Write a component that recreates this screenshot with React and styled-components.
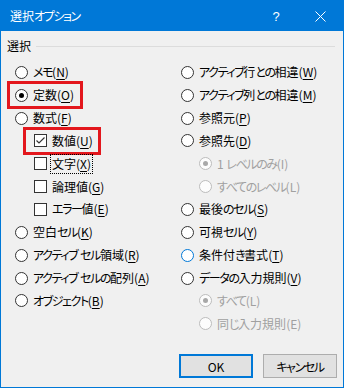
import React from "react";
import styled, { createGlobalStyle, css } from "styled-components";

const GlobalStyle = createGlobalStyle`
  html, body { margin: 0; padding: 0; background: #f0f0f0; }
  body {
    font-family: "Noto Sans CJK JP", "Noto Sans", sans-serif;
    font-size: 12px;
    font-feature-settings: "palt";
  }
`;

const Dialog = styled.div`
  width: 344px;
  height: 388px;
  box-sizing: border-box;
  border: 1px solid #0078d7;
  background: #f0f0f0;
  display: flex;
  flex-direction: column;
  color: #000;
`;

const TitleBar = styled.div`
  height: 30px;
  flex: none;
  background: #0078d7;
  color: #fff;
  display: flex;
  align-items: center;
  padding-left: 9px;
`;

const Title = styled.div`
  flex: 1;
  font-size: 12px;
  line-height: 16px;
`;

const TitleButton = styled.div`
  width: 46px;
  height: 30px;
  display: flex;
  align-items: center;
  justify-content: center;
  font-family: "Liberation Sans", sans-serif;
  font-size: 13px;
  padding-left: ${(p) => p.$shift || 0}px;
  box-sizing: border-box;
`;

const GroupHeader = styled.div`
  display: flex;
  align-items: center;
  gap: 5px;
  height: 16px;
  margin: 7px 8px 0 6px;
  line-height: 16px;
`;

const Rule = styled.div`
  flex: 1;
  height: 1px;
  background: #dcdcdc;
`;

const Columns = styled.div`
  display: grid;
  grid-template-columns: 166px 1fr;
  padding: 7px 0 0 14px;
`;

const Column = styled.div`
  display: grid;
  grid-auto-rows: 22.85px;
`;

const Row = styled.div`
  display: flex;
  align-items: center;
  padding-left: ${(p) => p.$indent || 0}px;
`;

const Item = styled.div`
  position: relative;
  display: flex;
  align-items: center;
  gap: 5px;
  line-height: 16px;
  color: ${(p) => (p.$disabled ? "#a0a0a0" : "#000")};
  ${(p) =>
    p.$mark &&
    css`
      &::after {
        content: "";
        position: absolute;
        top: -6px;
        bottom: -6px;
        left: ${p.$mark.left}px;
        right: ${p.$mark.right}px;
        border: 3px solid #e3171d;
      }
    `}
`;

const Radio = styled.span`
  width: 13px;
  height: 13px;
  box-sizing: border-box;
  border-radius: 50%;
  border: 1px solid ${(p) => (p.$disabled ? "#bcbcbc" : p.$hover ? "#0078d7" : "#333")};
  background: ${(p) => (p.$disabled ? "#fcfcfc" : "#fff")};
  display: flex;
  align-items: center;
  justify-content: center;
  flex: none;
  &::before {
    content: "";
    display: ${(p) => (p.$checked ? "block" : "none")};
    width: 5px;
    height: 5px;
    border-radius: 50%;
    background: ${(p) => (p.$disabled ? "#a8a8a8" : "#000")};
  }
`;

const Box = styled.span`
  width: 13px;
  height: 13px;
  box-sizing: border-box;
  border: 1px solid #333;
  background: #fff;
  flex: none;
  display: flex;
  align-items: center;
  justify-content: center;
`;

const Text = styled.span`
  white-space: pre;
  ${(p) =>
    p.$focus &&
    css`
      outline: 1px dotted #000;
      outline-offset: 1px;
    `}
`;

// Yu Gothic UI kana are narrower than Noto's, tighten kana runs
const Kana = styled.span`
  letter-spacing: -1.4px;
`;

const Key = styled.span`
  text-decoration: ${(p) => (p.$disabled ? "none" : "underline")};
  text-underline-offset: 2px;
`;

const Footer = styled.div`
  margin-top: auto;
  display: flex;
  justify-content: flex-end;
  gap: 10px;
  padding: 0 6px 9px 0;
`;

const Button = styled.button`
  width: 74px;
  height: 24px;
  box-sizing: border-box;
  background: #e1e1e1;
  border: ${(p) => (p.$primary ? "2px solid #0078d7" : "1px solid #adadad")};
  font-family: "Noto Sans CJK JP", "Noto Sans", sans-serif;
  font-feature-settings: "palt";
  font-size: 12px;
  color: #000;
  padding: 0;
`;

const left = [
  { type: "radio", label: "メモ", key: "N" },
  { type: "radio", label: "定数", key: "O", checked: true, mark: { left: -8, right: -9 } },
  { type: "radio", label: "数式", key: "F" },
  { type: "check", label: "数値", key: "U", checked: true, indent: 19, mark: { left: -11, right: -8 } },
  { type: "check", label: "文字", key: "X", indent: 19, focus: true },
  { type: "check", label: "論理値", key: "G", indent: 19 },
  { type: "check", label: "エラー値", key: "E", indent: 19 },
  { type: "radio", label: "空白セル", key: "K" },
  { type: "radio", label: "アクティブ セル領域", key: "R" },
  { type: "radio", label: "アクティブ セルの配列", key: "A" },
  { type: "radio", label: "オブジェクト", key: "B" },
];

const right = [
  { type: "radio", label: "アクティブ行との相違", key: "W" },
  { type: "radio", label: "アクティブ列との相違", key: "M" },
  { type: "radio", label: "参照元", key: "P" },
  { type: "radio", label: "参照先", key: "D" },
  { type: "radio", label: "1 レベルのみ", key: "I", indent: 18, disabled: true, checked: true },
  { type: "radio", label: "すべてのレベル", key: "L", indent: 18, disabled: true },
  { type: "radio", label: "最後のセル", key: "S" },
  { type: "radio", label: "可視セル", key: "Y" },
  { type: "radio", label: "条件付き書式", key: "T", hover: true },
  { type: "radio", label: "データの入力規則", key: "V" },
  { type: "radio", label: "すべて", key: "L", indent: 18, disabled: true, checked: true },
  { type: "radio", label: "同じ入力規則", key: "E", indent: 18, disabled: true },
];

function JpText({ children }) {
  return children
    .split(/([\u3040-\u30ff]+)/)
    .map((part, i) =>
      /[\u3040-\u30ff]/.test(part) ? <Kana key={i}>{part}</Kana> : part
    );
}

function CheckMark() {
  return (
    <svg width="11" height="11" viewBox="0 0 11 11">
      <polyline points="1.5,5.5 4,8 9.5,2.5" fill="none" stroke="#333" strokeWidth="1.2" />
    </svg>
  );
}

function Option({ opt }) {
  return (
    <Row $indent={opt.indent}>
      <Item $disabled={opt.disabled} $mark={opt.mark}>
        {opt.type === "radio" ? (
          <Radio $checked={opt.checked} $disabled={opt.disabled} $hover={opt.hover} />
        ) : (
          <Box>{opt.checked && <CheckMark />}</Box>
        )}
        <Text $focus={opt.focus}>
          <JpText>{opt.label}</JpText>(<Key $disabled={opt.disabled}>{opt.key}</Key>)
        </Text>
      </Item>
    </Row>
  );
}

export default function App() {
  return (
    <>
      <GlobalStyle />
      <Dialog>
        <TitleBar>
          <Title>
            <JpText>選択オプション</JpText>
          </Title>
          <TitleButton $shift={4}>?</TitleButton>
          <TitleButton>
            <svg width="11" height="11" viewBox="0 0 11 11">
              <path d="M0.5 0.5 L10.5 10.5 M10.5 0.5 L0.5 10.5" stroke="#fff" strokeWidth="1" />
            </svg>
          </TitleButton>
        </TitleBar>
        <GroupHeader>
          <span>選択</span>
          <Rule />
        </GroupHeader>
        <Columns>
          <Column>
            {left.map((opt, i) => (
              <Option key={i} opt={opt} />
            ))}
          </Column>
          <Column>
            {right.map((opt, i) => (
              <Option key={i} opt={opt} />
            ))}
          </Column>
        </Columns>
        <Footer>
          <Button $primary>OK</Button>
          <Button>
            <JpText>キャンセル</JpText>
          </Button>
        </Footer>
      </Dialog>
    </>
  );
}
